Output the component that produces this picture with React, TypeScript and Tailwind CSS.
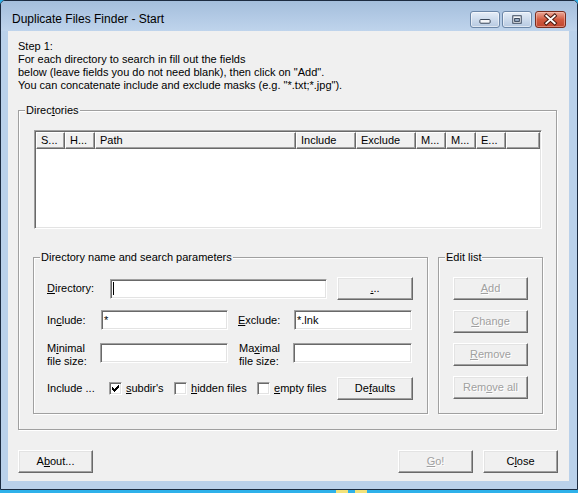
import React from 'react';

const U = ({ children }: { children: React.ReactNode }) => <span className="underline">{children}</span>;

type BtnProps = { children: React.ReactNode; className?: string; disabled?: boolean };

const Btn = ({ children, className = '', disabled = false }: BtnProps) => (
  <div
    className={`flex h-[23px] items-center justify-center border border-t-white border-l-white border-r-[#696969] border-b-[#696969] bg-[#f0f0f0] shadow-[inset_-1px_-1px_0_#a0a0a0,inset_1px_1px_0_#e3e3e3] ${
      disabled ? 'text-[#a0a0a0] [text-shadow:1px_1px_0_#ffffff]' : 'text-black'
    } ${className}`}
  >
    {children}
  </div>
);

const Field = ({ children, className = '' }: { children?: React.ReactNode; className?: string }) => (
  <div
    className={`flex h-[20px] items-center border border-t-[#a0a0a0] border-l-[#a0a0a0] border-r-white border-b-white bg-white pl-[2px] shadow-[inset_1px_1px_0_#696969,inset_-1px_-1px_0_#e3e3e3] ${className}`}
  >
    {children}
  </div>
);

const checkRows = [
  [6, 1],
  [5, 2],
  [0, 1, 4, 3],
  [0, 2, 3, 3],
  [0, 5],
  [1, 3],
  [2, 1],
];

const Check = ({ checked = false }: { checked?: boolean }) => (
  <div className="flex h-[13px] w-[13px] shrink-0 items-center justify-center border border-t-[#a0a0a0] border-l-[#a0a0a0] border-r-white border-b-white bg-white shadow-[inset_1px_1px_0_#696969,inset_-1px_-1px_0_#e3e3e3]">
    {checked && (
      <svg width="7" height="7" viewBox="0 0 7 7" shapeRendering="crispEdges">
        {checkRows.map((r, y) => (
          <React.Fragment key={y}>
            <rect x={r[0]} y={y} width={r[1]} height={1} fill="#000" />
            {r.length > 2 && <rect x={r[2]} y={y} width={r[3]} height={1} fill="#000" />}
          </React.Fragment>
        ))}
      </svg>
    )}
  </div>
);

const Group = ({ label, className = '', children }: { label: React.ReactNode; className?: string; children: React.ReactNode }) => (
  <div className={`relative border border-[#a0a0a0] shadow-[inset_1px_1px_0_#ffffff,1px_1px_0_#ffffff] ${className}`}>
    <span className="absolute left-[6px] top-[-7px] bg-[#f0f0f0] px-[1px] leading-[13px]">{label}</span>
    {children}
  </div>
);

const HeadCell = ({ w, children }: { w: string; children?: React.ReactNode }) => (
  <div
    className={`flex h-[17px] items-center border border-t-white border-l-white border-r-[#696969] border-b-[#696969] pl-[4px] shadow-[inset_-1px_-1px_0_#a0a0a0] ${w}`}
  >
    {children}
  </div>
);

const CaptionBtn = ({ children }: { children: React.ReactNode }) => (
  <div className="flex h-[17px] w-[30px] items-center justify-center rounded-[3px] border border-[#6b86a7] bg-linear-to-b from-[#e6eef8] via-[#cddbec] to-[#b6c9e1] shadow-[inset_0_0_0_1px_rgba(255,255,255,0.55)]">
    {children}
  </div>
);

export default function App() {
  return (
    <div className="h-[493px] w-[578px] overflow-hidden bg-[#2eb1ea] font-['Liberation_Sans',Arial,sans-serif] text-[11px] text-black">
      <div className="flex h-[490px] w-[578px] flex-col rounded-t-[5px] border border-[#1c2b40] bg-[#bad1ea]">
        {/* title bar */}
        <div className="flex h-[30px] items-start rounded-t-[4px] bg-linear-to-b from-[#a4bedc] to-[#bfd4ec]">
          <div className="ml-[11px] mt-[10px] text-[12px] leading-[16px]">Duplicate Files Finder - Start</div>
          <div className="ml-auto mr-[11px] mt-[10px] flex gap-[2px]">
            <CaptionBtn>
              <svg width="30" height="17" viewBox="0 0 30 17">
                <rect x="9.5" y="8.5" width="11" height="4" rx="1" fill="#f4f6f9" stroke="#2c3a4e" />
              </svg>
            </CaptionBtn>
            <CaptionBtn>
              <svg width="30" height="17" viewBox="0 0 30 17">
                <rect x="10.5" y="4.5" width="9" height="8" fill="#f4f6f9" stroke="#2c3a4e" />
                <rect x="12.5" y="7.5" width="5" height="3" fill="#9fb3cc" stroke="#2c3a4e" />
              </svg>
            </CaptionBtn>
            <div className="ml-[1px] flex h-[17px] w-[31px] items-center justify-center rounded-[3px] border border-[#7a2c1e] bg-linear-to-b from-[#eaa898] via-[#d25a40] to-[#c0462f] shadow-[inset_0_0_0_1px_rgba(255,210,200,0.45)]">
              <svg width="31" height="17" viewBox="0 0 31 17">
                <path d="M11 4.5 L20 12.5 M20 4.5 L11 12.5" stroke="#4a1a10" strokeWidth="4" strokeLinecap="square" />
                <path d="M11 4.5 L20 12.5 M20 4.5 L11 12.5" stroke="#ffffff" strokeWidth="2" strokeLinecap="square" />
              </svg>
            </div>
          </div>
        </div>

        {/* client area */}
        <div className="pl-[7px] pr-[8px]">
          <div className="flex h-[450px] w-[561px] flex-col bg-[#f0f0f0]">
            <div className="pl-[10px] pt-[9px] leading-[13px]">
              <div>Step 1:</div>
              <div>For each directory to search in fill out the fields</div>
              <div>below (leave fields you do not need blank), then click on "Add".</div>
              <div>You can concatenate include and exclude masks (e.g. "*.txt;*.jpg").</div>
            </div>

            <Group
              label={
                <>
                  Direc<U>t</U>ories
                </>
              }
              className="ml-[10px] mt-[18px] h-[320px] w-[539px] pl-[14px]"
            >
              {/* list view */}
              <div className="ml-[1px] mt-[19px] h-[99px] w-[508px] border border-t-[#a0a0a0] border-l-[#a0a0a0] border-r-white border-b-white bg-white p-[1px] shadow-[inset_1px_1px_0_#696969,inset_-1px_-1px_0_#e3e3e3]">
                <div className="flex bg-[#f0f0f0]">
                  <HeadCell w="w-[29px]">S...</HeadCell>
                  <HeadCell w="w-[30px]">H...</HeadCell>
                  <HeadCell w="w-[201px]">Path</HeadCell>
                  <HeadCell w="w-[60px]">Include</HeadCell>
                  <HeadCell w="w-[60px]">Exclude</HeadCell>
                  <HeadCell w="w-[30px]">M...</HeadCell>
                  <HeadCell w="w-[30px]">M...</HeadCell>
                  <HeadCell w="w-[30px]">E...</HeadCell>
                  <HeadCell w="flex-1" />
                </div>
              </div>

              <div className="mt-[28px] flex">
                {/* directory name and search parameters */}
                <Group label="Directory name and search parameters" className="h-[157px] w-[395px] pl-[13px]">
                  <div className="mt-[19px] flex h-[23px] items-center">
                    <div className="w-[63px]">
                      <U>D</U>irectory:
                    </div>
                    <Field className="w-[217px]">
                      <div className="h-[13px] w-[1px] bg-black" />
                    </Field>
                    <Btn className="ml-[10px] w-[76px]">
                      <U>.</U>..
                    </Btn>
                  </div>

                  <div className="mt-[10px] flex h-[20px] items-center">
                    <div className="w-[54px]">
                      In<U>c</U>lude:
                    </div>
                    <Field className="w-[127px]">*</Field>
                    <div className="ml-[10px] w-[56px]">
                      <U>E</U>xclude:
                    </div>
                    <Field className="w-[118px]">*.lnk</Field>
                  </div>

                  <div className="mt-[13px] flex h-[20px] items-start">
                    <div className="-mt-[1px] w-[53px] leading-[13px]">
                      M<U>i</U>nimal
                      <br />
                      file size:
                    </div>
                    <Field className="w-[128px]" />
                    <div className="-mt-[1px] ml-[11px] w-[54px] leading-[13px]">
                      Ma<U>x</U>imal
                      <br />
                      file size:
                    </div>
                    <Field className="w-[119px]" />
                  </div>

                  <div className="mt-[14px] flex h-[23px] items-center">
                    <div className="w-[62px]">Include ...</div>
                    <div className="flex w-[65px] items-center gap-[4px]">
                      <Check checked />
                      <span>
                        <U>s</U>ubdir's
                      </span>
                    </div>
                    <div className="flex w-[83px] items-center gap-[4px]">
                      <Check />
                      <span>
                        <U>h</U>idden files
                      </span>
                    </div>
                    <div className="flex w-[80px] items-center gap-[4px]">
                      <Check />
                      <span>
                        <U>e</U>mpty files
                      </span>
                    </div>
                    <Btn className="w-[76px]">
                      De<U>f</U>aults
                    </Btn>
                  </div>
                </Group>

                {/* edit list */}
                <Group label="Edit list" className="ml-[10px] flex h-[157px] w-[105px] flex-col gap-[10px] pl-[14px] pt-[19px]">
                  <Btn disabled className="w-[75px]">
                    <U>A</U>dd
                  </Btn>
                  <Btn disabled className="w-[75px]">
                    <U>C</U>hange
                  </Btn>
                  <Btn disabled className="w-[75px]">
                    <U>R</U>emove
                  </Btn>
                  <Btn disabled className="w-[75px]">
                    Rem<U>o</U>ve all
                  </Btn>
                </Group>
              </div>
            </Group>

            <div className="mt-[20px] flex pl-[10px] pr-[11px]">
              <Btn className="w-[75px]">
                A<U>b</U>out...
              </Btn>
              <Btn disabled className="ml-auto w-[75px]">
                <U>G</U>o!
              </Btn>
              <Btn className="ml-[10px] w-[75px]">
                C<U>l</U>ose
              </Btn>
            </div>
          </div>
        </div>
      </div>

      {/* desktop strip below the window */}
      <div className="flex h-[3px]">
        <div className="ml-[336px] w-[12px] bg-[#f3e27a]" />
        <div className="ml-[7px] w-[12px] bg-[#f3e27a]" />
      </div>
    </div>
  );
}
